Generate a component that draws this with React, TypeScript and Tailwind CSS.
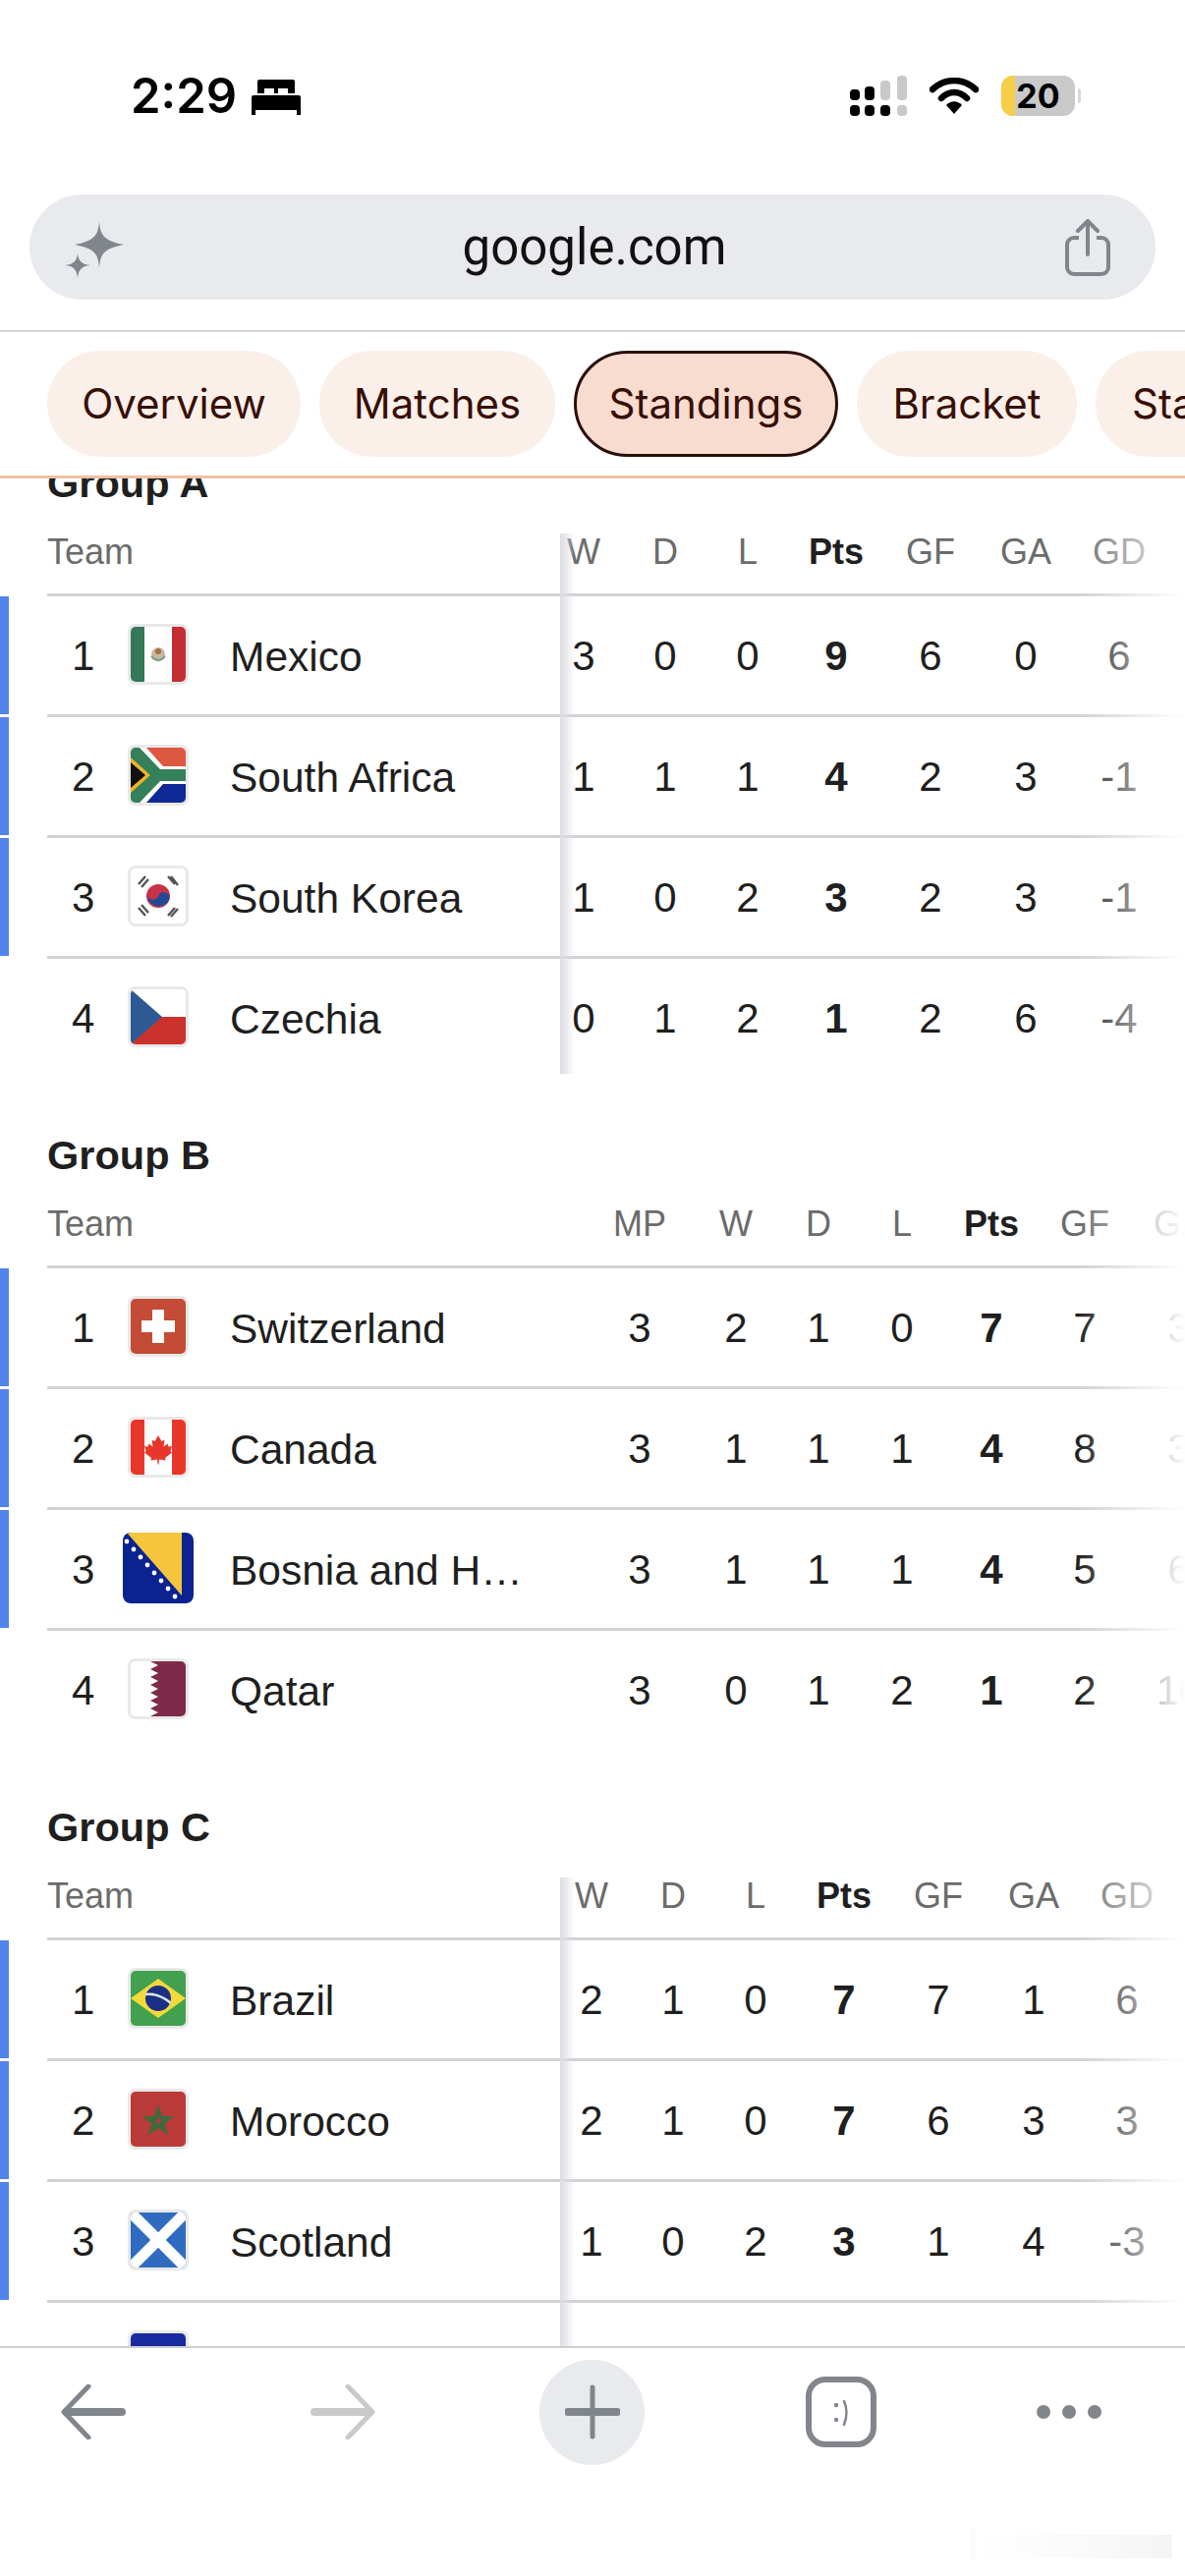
import React from 'react';

const sans = "font-['Liberation_Sans',Arial,sans-serif]";

type Row = { rank: string; flag: React.ReactNode; name: string; top?: boolean; stats: string[] };

const FlagBox = ({ children }: { children: React.ReactNode }) => (
  <div className="w-[62px] h-[62px] rounded-[8px] border-[3px] border-[#e9e9e9] overflow-hidden shrink-0">
    <svg viewBox="0 0 56 56" className="w-full h-full block">
      {children}
    </svg>
  </div>
);

const Mexico = () => (
  <FlagBox>
    <rect width="56" height="56" fill="#fff" />
    <rect width="14" height="56" fill="#35795a" />
    <rect x="42" width="14" height="56" fill="#c52f33" />
    <circle cx="28" cy="28" r="7" fill="#c9b8a0" />
    <path d="M21 30q7 8 14 0" fill="none" stroke="#7fa08a" strokeWidth="2" />
    <circle cx="28" cy="25" r="3" fill="#a5713f" />
  </FlagBox>
);

const SouthAfrica = () => (
  <FlagBox>
    <rect width="56" height="28" fill="#dd5840" />
    <rect y="28" width="56" height="28" fill="#0f2a96" />
    <path d="M0 0 L16 0 L33 19 L56 19 L56 37 L33 37 L16 56 L0 56Z" fill="#fff" />
    <path d="M0 0 L9 0 L30 22 L56 22 L56 34 L30 34 L9 56 L0 56Z" fill="#34805a" />
    <path d="M0 10 L20 28 L0 46Z" fill="#f0b429" />
    <path d="M0 15 L15 28 L0 41Z" fill="#111" />
  </FlagBox>
);

const Korea = () => (
  <FlagBox>
    <rect width="56" height="56" fill="#fff" />
    <circle cx="28" cy="28" r="12" fill="#c8334a" />
    <path d="M16.5 25 A12 12 0 0 0 39.5 31 A6 6 0 0 0 28 28 A6 6 0 0 1 16.5 25Z" fill="#1f4a96" />
    <path d="M8 16 L15 8 M11 19 L18 11 M38 8 L45 16 M41 8 L48 17 M8 40 L15 48 M11 37 L18 45 M38 48 L45 40 M41 49 L48 41" stroke="#555" strokeWidth="2.4" />
  </FlagBox>
);

const Czechia = () => (
  <FlagBox>
    <rect width="56" height="28" fill="#fff" />
    <rect y="28" width="56" height="28" fill="#cb322c" />
    <path d="M0 0 L32 28 L0 56Z" fill="#2d5a94" />
  </FlagBox>
);

const Switzerland = () => (
  <FlagBox>
    <rect width="56" height="56" fill="#c44b36" />
    <path d="M22 11h12v11h11v12H34v11H22V34H11V22h11z" fill="#fff" />
  </FlagBox>
);

const Canada = () => (
  <FlagBox>
    <rect width="56" height="56" fill="#fff" />
    <rect width="14" height="56" fill="#e8372a" />
    <rect x="42" width="14" height="56" fill="#e8372a" />
    <path d="M28 16l3.5 6 3-1.500-1 7 4-3 1 3 3.500-.5-1.500 5 1.500 1.500-7 5.500.8 2.500-6.800-1-.5 5h-1l-.5-5-6.800 1 .8-2.500-7-5.500 1.500-1.500-1.500-5 3.500.5 1-3 4 3-1-7 3 1.500z" fill="#e8372a" />
  </FlagBox>
);

const Bosnia = () => (
  <div className="w-[72px] h-[72px] rounded-[8px] overflow-hidden shrink-0 -mx-[5px]">
    <svg viewBox="0 0 72 72" className="w-full h-full block">
      <rect width="72" height="72" fill="#0b2390" />
      <path d="M4 0 H60 V64Z" fill="#f5c63d" />
      <g fill="#fff">
        <circle cx="4" cy="9" r="2.400" />
        <circle cx="11" cy="17" r="2.400" />
        <circle cx="18" cy="25" r="2.400" />
        <circle cx="25" cy="33" r="2.400" />
        <circle cx="32" cy="41" r="2.400" />
        <circle cx="39" cy="49" r="2.400" />
        <circle cx="46" cy="57" r="2.400" />
        <circle cx="53" cy="65" r="2.400" />
      </g>
    </svg>
  </div>
);

const Qatar = () => (
  <FlagBox>
    <rect width="56" height="56" fill="#fff" />
    <path d="M20 0H56V56H20L28 52 20 48 28 44 20 40 28 36 20 32 28 28 20 24 28 20 20 16 28 12 20 8 28 4Z" fill="#7e2a4a" />
  </FlagBox>
);

const Brazil = () => (
  <FlagBox>
    <rect width="56" height="56" fill="#43a04f" />
    <path d="M28 8 L56 28 L28 48 L0 28Z" fill="#f3d93a" />
    <circle cx="28" cy="28" r="13" fill="#1a2f85" />
    <path d="M15 24 Q28 22 41 33" fill="none" stroke="#dfe3ee" strokeWidth="2.500" />
  </FlagBox>
);

const Morocco = () => (
  <FlagBox>
    <rect width="56" height="56" fill="#b93a39" />
    <path d="M28 13l4 12h12.500l-10 7.500 4 12-10.500-7.500-10.500 7.500 4-12-10-7.500H24z" fill="#3f6b3c" />
    <circle cx="28" cy="30" r="2.500" fill="#b93a39" />
  </FlagBox>
);

const Scotland = () => (
  <FlagBox>
    <rect width="56" height="56" fill="#2f6cc0" />
    <path d="M0 0 L56 56 M56 0 L0 56" stroke="#fff" strokeWidth="11" />
  </FlagBox>
);

const Haiti = () => (
  <FlagBox>
    <rect width="56" height="56" fill="#1a2aa0" />
  </FlagBox>
);

const groups: {
  title: string;
  team: string;
  cols: string;
  split: boolean;
  heads: string[];
  rows: Row[];
}[] = [
  {
    title: 'Group A',
    team: 'w-[504px]',
    cols: 'grid-cols-[84px_82px_86px_94px_98px_96px_94px]',
    split: true,
    heads: ['W', 'D', 'L', 'Pts', 'GF', 'GA', 'GD'],
    rows: [
      { rank: '1', flag: <Mexico />, name: 'Mexico', top: true, stats: ['3', '0', '0', '9', '6', '0', '6'] },
      { rank: '2', flag: <SouthAfrica />, name: 'South Africa', top: true, stats: ['1', '1', '1', '4', '2', '3', '-1'] },
      { rank: '3', flag: <Korea />, name: 'South Korea', top: true, stats: ['1', '0', '2', '3', '2', '3', '-1'] },
      { rank: '4', flag: <Czechia />, name: 'Czechia', stats: ['0', '1', '2', '1', '2', '6', '-4'] },
    ],
  },
  {
    title: 'Group B',
    team: 'w-[553px]',
    cols: 'grid-cols-[100px_96px_72px_98px_84px_106px_86px]',
    split: false,
    heads: ['MP', 'W', 'D', 'L', 'Pts', 'GF', 'GA'],
    rows: [
      { rank: '1', flag: <Switzerland />, name: 'Switzerland', top: true, stats: ['3', '2', '1', '0', '7', '7', '3'] },
      { rank: '2', flag: <Canada />, name: 'Canada', top: true, stats: ['3', '1', '1', '1', '4', '8', '3'] },
      { rank: '3', flag: <Bosnia />, name: 'Bosnia and Herzegovina', top: true, stats: ['3', '1', '1', '1', '4', '5', '6'] },
      { rank: '4', flag: <Qatar />, name: 'Qatar', stats: ['3', '0', '1', '2', '1', '2', '10'] },
    ],
  },
  {
    title: 'Group C',
    team: 'w-[512px]',
    cols: 'grid-cols-[84px_82px_86px_94px_98px_96px_94px]',
    split: true,
    heads: ['W', 'D', 'L', 'Pts', 'GF', 'GA', 'GD'],
    rows: [
      { rank: '1', flag: <Brazil />, name: 'Brazil', top: true, stats: ['2', '1', '0', '7', '7', '1', '6'] },
      { rank: '2', flag: <Morocco />, name: 'Morocco', top: true, stats: ['2', '1', '0', '7', '6', '3', '3'] },
      { rank: '3', flag: <Scotland />, name: 'Scotland', top: true, stats: ['1', '0', '2', '3', '1', '4', '-3'] },
      { rank: '', flag: <Haiti />, name: '', stats: [] },
    ],
  },
];

const StatusBar = () => (
  <div className="h-[198px] flex items-start pt-[77px] pl-[133px] pr-[106px]">
    <span className="font-['Inter',sans-serif] font-semibold text-[49px] leading-[41px] text-black w-[123px]">2:29</span>
    {/* bed */}
    <svg width="50" height="36" viewBox="0 0 50 36" className="mt-[4px]">
      <path d="M6 2a2 2 0 0 1 2-2h34a2 2 0 0 1 2 2v12H37v-5H27v5h-4V9H13v5H6z" fill="#000" />
      <path d="M2 16h46a2 2 0 0 1 2 2v18h-4v-5H4v5H0V18a2 2 0 0 1 2-2z" fill="#000" />
    </svg>
    <div className="ml-auto flex items-start">
      {/* signal, dual sim */}
      <svg width="58" height="41" viewBox="0 0 58 41">
        <rect x="0" y="14" width="10" height="11" rx="4" fill="#000" />
        <rect x="15" y="11" width="10" height="14" rx="4" fill="#000" />
        <rect x="31" y="5" width="10" height="20" rx="4" fill="#c9c9c9" />
        <rect x="48" y="0" width="10" height="25" rx="4" fill="#c9c9c9" />
        <rect x="0" y="30" width="10" height="11" rx="4" fill="#000" />
        <rect x="15" y="30" width="10" height="11" rx="4" fill="#000" />
        <rect x="31" y="30" width="10" height="11" rx="4" fill="#000" />
        <rect x="48" y="30" width="10" height="11" rx="4" fill="#c9c9c9" />
      </svg>
      {/* wifi */}
      <svg width="50" height="38" viewBox="0 0 50 38" className="ml-[23px] mt-[2px]">
        <path d="M3 12 C16 0 34 0 47 12" fill="none" stroke="#000" strokeWidth="6.500" strokeLinecap="round" />
        <path d="M12 21 C20 13 30 13 38 21" fill="none" stroke="#000" strokeWidth="6.500" strokeLinecap="round" />
        <path d="M17 28 C22 23 28 23 33 28 L25 37Z" fill="#000" />
      </svg>
      {/* battery */}
      <div className="ml-[23px] w-[75px] h-[41px] rounded-[12px] overflow-hidden bg-[#c9c9c9] relative text-center font-['Inter',sans-serif] font-bold text-[34px] leading-[41px] text-black">
        <div className="absolute left-0 top-0 bottom-0 w-[14px] bg-[#f5cf45]" />
        20
      </div>
      <div className="ml-[3px] mt-[13px] w-[3px] h-[15px] rounded-r-full bg-[#d6d6d6]" />
    </div>
  </div>
);

const UrlBar = () => (
  <div className="mx-[30px] h-[107px] rounded-[54px] bg-[#e8eaed] flex items-center justify-between pl-[36px] pr-[46px]">
    <svg width="60" height="58" viewBox="0 0 60 58" className="mt-[4px]">
      <path d="M35 0 C36 14 39 20 60 24 C39 28 36 34 35 48 C34 34 31 28 10 24 C31 20 34 14 35 0Z" fill="#80868b" />
      <path d="M13 33 C14 40 16 44 26 45 C16 46 14 50 13 58 C12 50 10 46 0 45 C10 44 12 40 13 33Z" fill="#80868b" />
    </svg>
    <span className="font-['Roboto',sans-serif] text-[51px] leading-none text-[#111]">google.com</span>
    <svg width="46" height="58" viewBox="0 0 46 58">
      <path d="M14 19H9a7 7 0 0 0-7 7v23a7 7 0 0 0 7 7h28a7 7 0 0 0 7-7V26a7 7 0 0 0-7-7h-5" fill="none" stroke="#80868b" strokeWidth="4" />
      <path d="M23 36V3M13 12l10-10 10 10" fill="none" stroke="#80868b" strokeWidth="4" strokeLinecap="round" strokeLinejoin="round" />
    </svg>
  </div>
);

const tabs = [
  { label: 'Overview', width: 'w-[258px]' },
  { label: 'Matches', width: 'w-[240px]' },
  { label: 'Standings', width: 'w-[269px]' },
  { label: 'Bracket', width: 'w-[224px]' },
  { label: 'Stats', width: 'w-[174px]' },
];

const Tabs = () => (
  <div className="flex gap-[19px] pl-[48px] pt-[19px] overflow-hidden border-t-2 border-[#d4d4d4] mt-[31px] h-[148px]">
    {tabs.map((t) => (
      <div
        key={t.label}
        className={`${t.width} h-[108px] pb-[2px] shrink-0 rounded-[54px] flex items-center justify-center font-['Inter',sans-serif] text-[42px] text-[#370f05] ${
          t.label === 'Standings' ? 'bg-[#f8dcd0] border-[3px] border-[#2a0e05]' : 'bg-[#fbefe9]'
        }`}
      >
        {t.label}
      </div>
    ))}
  </div>
);

const Group = ({ group }: { group: (typeof groups)[number] }) => (
  <section className={`pb-[52px] ${sans}`}>
    <h2 className="h-[52px] pl-[48px] pt-[2px] font-bold text-[41.5px] leading-[52px] text-[#1f1f1f]">{group.title}</h2>
    <div className="relative overflow-hidden">
      <div className="flex h-[88px] items-center pl-[48px] pt-[4px] text-[36px] text-[#6b6b6b]">
        <div className={`${group.team} shrink-0`}>Team</div>
        <div className={`grid ${group.cols} shrink-0 text-center`}>
          {group.heads.map((h) => (
            <span key={h} className={h === 'Pts' ? 'font-bold text-[#1f1f1f]' : ''}>
              {h}
            </span>
          ))}
        </div>
      </div>
      {group.rows.map((r, i) => (
        <div key={i} className="flex h-[123px]">
          <div className={r.top ? 'w-[9px] shrink-0 mt-[3px] bg-[#5383ec]' : 'w-[9px] shrink-0'} />
          <div className="ml-[39px] flex-1 flex items-center border-t-[3px] border-[#d2d2d2] text-[42px] text-[#1f1f1f]">
            <div className={`${group.team} shrink-0 flex items-center`}>
              <span className="w-[82px] pl-[25px] shrink-0">{r.rank}</span>
              <div className="mt-[-2px] shrink-0">{r.flag}</div>
              <span className="ml-[42px] mt-[4px] w-[305px] truncate text-[42.5px]">{r.name}</span>
            </div>
            <div className={`grid ${group.cols} shrink-0 text-center`}>
              {r.stats.map((s, j) => (
                <span key={j} className={group.heads[j] === 'Pts' ? 'font-bold' : ''}>
                  {s}
                </span>
              ))}
            </div>
          </div>
        </div>
      ))}
      {group.split && (
        <div className="absolute left-[570px] top-[27px] bottom-[3px] w-[15px] bg-gradient-to-r from-[#dcdce2] to-transparent" />
      )}
      <div className="absolute right-0 top-0 bottom-0 w-[110px] bg-gradient-to-r from-white/0 to-white" />
    </div>
  </section>
);

const BottomBar = () => (
  <div className="h-[234px] shrink-0 border-t-2 border-[#cfcfcf] bg-white relative">
    <div className="flex items-center h-[130px] pl-[62px]">
      <svg width="66" height="56" viewBox="0 0 66 56">
        <path d="M28 2 L3 28 L28 54" fill="none" stroke="#80868b" strokeWidth="5" strokeLinecap="round" strokeLinejoin="round" />
        <path d="M6 28H62" stroke="#80868b" strokeWidth="8" strokeLinecap="round" />
      </svg>
      <svg width="66" height="56" viewBox="0 0 66 56" className="ml-[188px]">
        <path d="M38 2 L63 28 L38 54" fill="none" stroke="#c9c9c9" strokeWidth="5" strokeLinecap="round" strokeLinejoin="round" />
        <path d="M4 28H60" stroke="#c9c9c9" strokeWidth="8" strokeLinecap="round" />
      </svg>
      <div className="ml-[167px] w-[107px] h-[107px] rounded-full bg-[#e8eaed] flex items-center justify-center">
        <svg width="56" height="56" viewBox="0 0 56 56">
          <path d="M28 3V53" stroke="#80868b" strokeWidth="5" strokeLinecap="round" />
          <path d="M3 28H53" stroke="#80868b" strokeWidth="8" strokeLinecap="round" />
        </svg>
      </div>
      <svg width="72" height="72" viewBox="0 0 72 72" className="ml-[164px]">
        <rect x="3" y="3" width="66" height="66" rx="17" fill="none" stroke="#80868b" strokeWidth="6" />
        <circle cx="31" cy="29" r="2.200" fill="#80868b" />
        <circle cx="31" cy="44" r="2.200" fill="#80868b" />
        <path d="M39 25 Q44 36 39 49" fill="none" stroke="#80868b" strokeWidth="2.500" strokeLinecap="round" />
      </svg>
      <div className="ml-[163px] flex gap-[12px]">
        <div className="w-[14px] h-[14px] rounded-full bg-[#80868b]" />
        <div className="w-[14px] h-[14px] rounded-full bg-[#80868b]" />
        <div className="w-[14px] h-[14px] rounded-full bg-[#80868b]" />
      </div>
    </div>
    {/* faint smudge at the bottom right of the shot */}
    <div className="absolute left-[995px] top-[190px] w-[198px] h-[24px] bg-gradient-to-r from-white to-[#f5f5f5]" />
    <div className="absolute left-[988px] top-[184px] w-[5px] h-[32px] bg-[#fafafa]" />
  </div>
);

export default function App() {
  return (
    <div className="w-[1206px] h-[2622px] bg-white flex flex-col overflow-hidden">
      <header className="shrink-0 bg-white z-10 relative border-b-[3px] border-[#efbfa3]">
        <StatusBar />
        <UrlBar />
        <Tabs />
      </header>
      <main className="flex-1 min-h-0 overflow-hidden">
        <div className="-mt-[23px]">
          {groups.map((g) => (
            <Group key={g.title} group={g} />
          ))}
        </div>
      </main>
      <BottomBar />
    </div>
  );
}
